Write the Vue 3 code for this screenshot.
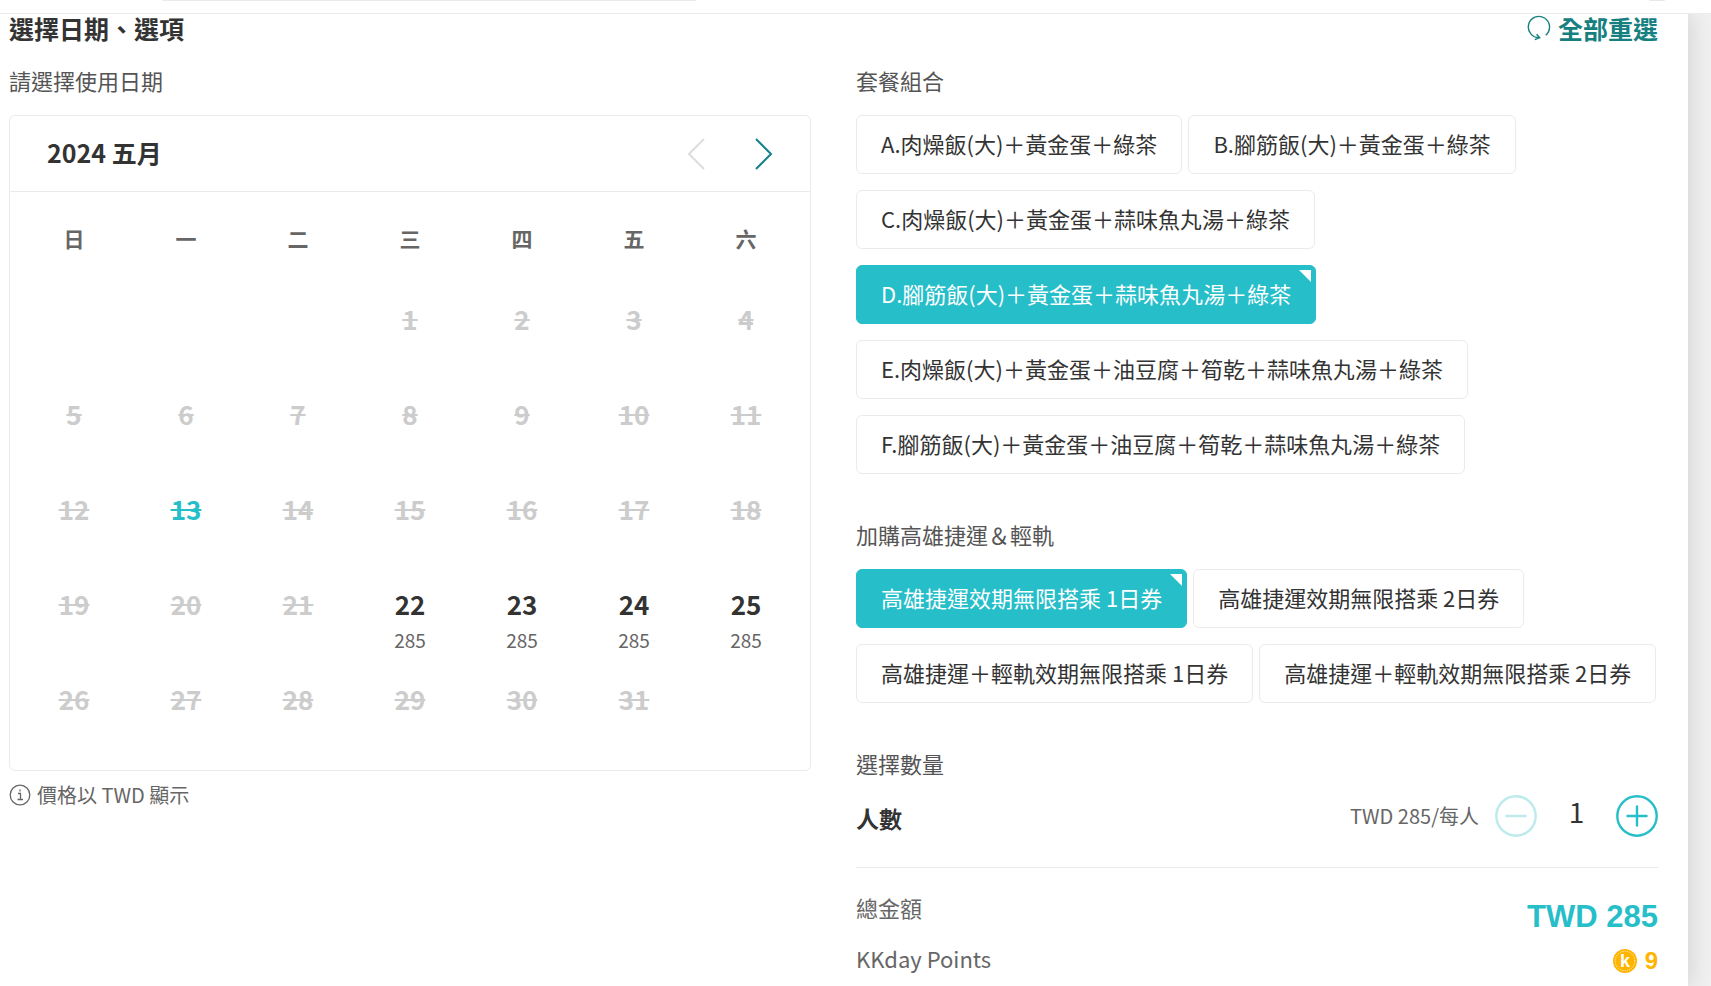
<template>
    <div class="page">
        <header class="topbar">
            <div class="search-edge"></div>
            <div class="avatar-edge"></div>
        </header>
        <main class="panel">
            <div class="title-row">
                <h2>選擇日期、選項</h2>
                <button type="button" class="reset" @click="reset">
                    <svg width="24" height="27" viewBox="0 0 24 27" aria-hidden="true">
                        <path d="M18.8 21.1A10.6 10.6 0 1 0 12.7 23.6M9.6 20.3l3.1 3.4-4.9 2" />
                    </svg>
                    全部重選
                </button>
            </div>

            <div class="columns">
                <section>
                    <h3>請選擇使用日期</h3>
                    <div class="calendar">
                        <div class="month">
                            <strong>2024 五月</strong>
                            <div class="arrows">
                                <button type="button" aria-label="上個月" disabled>
                                    <svg width="18" height="32" viewBox="0 0 18 32"><path d="M17 1L2 16l15 15" /></svg>
                                </button>
                                <button type="button" aria-label="下個月">
                                    <svg width="18" height="32" viewBox="0 0 18 32"><path d="M1 1l15 15L1 31" /></svg>
                                </button>
                            </div>
                        </div>
                        <table>
                            <thead>
                                <tr>
                                    <th v-for="name in weekdays" :key="name">{{ name }}</th>
                                </tr>
                            </thead>
                            <tbody>
                                <tr v-for="(week, i) in weeks" :key="i">
                                    <td v-for="(day, j) in week" :key="j">
                                        <button
                                            v-if="day"
                                            type="button"
                                            class="day"
                                            :class="{ today: day === 13 }"
                                            :disabled="!prices[day]"
                                        >
                                            <span class="number">{{ day }}</span>
                                            <span v-if="prices[day]" class="price">{{ prices[day] }}</span>
                                        </button>
                                    </td>
                                </tr>
                            </tbody>
                        </table>
                    </div>
                    <p class="note">
                        <svg width="22" height="22" viewBox="0 0 22 22" aria-hidden="true">
                            <circle cx="11" cy="11" r="9.8" />
                            <path d="M9 9.5h2.5v6M8.5 15.5h5.5M11 5.5v2" />
                        </svg>
                        價格以 TWD 顯示
                    </p>
                </section>

                <section>
                    <div v-for="group in groups" :key="group.title" class="group">
                        <h3>{{ group.title }}</h3>
                        <div class="chips">
                            <button
                                v-for="(option, i) in group.options"
                                :key="option"
                                type="button"
                                class="chip"
                                :class="{ selected: group.selected === i }"
                                :aria-pressed="group.selected === i"
                                @click="group.selected = i"
                            >{{ option }}</button>
                        </div>
                    </div>

                    <h3>選擇數量</h3>
                    <div class="quantity">
                        <strong>人數</strong>
                        <span class="unit">TWD 285/每人</span>
                        <button type="button" class="step" aria-label="減少" :disabled="count < 2" @click="count--">
                            <svg width="42" height="42" viewBox="0 0 42 42">
                                <circle cx="21" cy="21" r="19.7" />
                                <path d="M10.5 21h21" />
                            </svg>
                        </button>
                        <output>{{ count }}</output>
                        <button type="button" class="step" aria-label="增加" @click="count++">
                            <svg width="42" height="42" viewBox="0 0 42 42">
                                <circle cx="21" cy="21" r="19.7" />
                                <path d="M10.5 21h21M21 10.5v21" />
                            </svg>
                        </button>
                    </div>

                    <dl class="totals">
                        <div class="total">
                            <dt>總金額</dt>
                            <dd>TWD {{ count * 285 }}</dd>
                        </div>
                        <div class="points">
                            <dt>KKday Points</dt>
                            <dd>
                                <svg width="24" height="24" viewBox="0 0 24 24" aria-hidden="true">
                                    <circle class="coin" cx="12" cy="12" r="12" />
                                    <circle class="dots" cx="12" cy="12" r="9.8" />
                                    <text x="12" y="18" text-anchor="middle">k</text>
                                </svg>
                                {{ count * 9 }}
                            </dd>
                        </div>
                    </dl>
                </section>
            </div>
        </main>
    </div>
</template>

<script setup>
import { ref } from "vue";

const weekdays = ["日", "一", "二", "三", "四", "五", "六"];

// May 2024 starts on a Wednesday
const weeks = Array.from({ length: 5 }, (_, week) =>
    Array.from({ length: 7 }, (_, i) => {
        const day = week * 7 + i - 2;
        return day > 0 && day < 32 ? day : null;
    })
);

const prices = { 22: 285, 23: 285, 24: 285, 25: 285 };

const groups = ref([
    {
        title: "套餐組合",
        selected: 3,
        options: [
            "A.肉燥飯(大)＋黃金蛋＋綠茶",
            "B.腳筋飯(大)＋黃金蛋＋綠茶",
            "C.肉燥飯(大)＋黃金蛋＋蒜味魚丸湯＋綠茶",
            "D.腳筋飯(大)＋黃金蛋＋蒜味魚丸湯＋綠茶",
            "E.肉燥飯(大)＋黃金蛋＋油豆腐＋筍乾＋蒜味魚丸湯＋綠茶",
            "F.腳筋飯(大)＋黃金蛋＋油豆腐＋筍乾＋蒜味魚丸湯＋綠茶",
        ],
    },
    {
        title: "加購高雄捷運＆輕軌",
        selected: 0,
        options: [
            "高雄捷運效期無限搭乘 1日券",
            "高雄捷運效期無限搭乘 2日券",
            "高雄捷運＋輕軌效期無限搭乘 1日券",
            "高雄捷運＋輕軌效期無限搭乘 2日券",
        ],
    },
]);

const count = ref(1);

function reset() {
    groups.value.forEach((group) => {
        group.selected = null;
    });
    count.value = 1;
}
</script>

<style>
body {
    background: #f0f0f0;
}
</style>

<style scoped>
.page {
    display: flex;
    flex-direction: column;
    min-height: 100vh;
    overflow: hidden;
    color: #333;
    font-family: "Noto Sans CJK TC", sans-serif;
    font-size: 22px;
    line-height: 32px;
}

button {
    padding: 0;
    border: 0;
    background: none;
    color: inherit;
    font: inherit;
    cursor: pointer;
}

svg {
    display: block;
    fill: none;
    stroke: currentColor;
}

h2, h3, p, dl, dd {
    margin: 0;
}

.topbar {
    position: relative;
    z-index: 1;
    display: flex;
    justify-content: space-between;
    height: 13px;
    padding: 0 46px 0 162px;
    border-bottom: 1px solid #ebebeb;
    background: #fff;
}

.search-edge {
    width: 534px;
    height: 1px;
    background: #ebebeb;
}

.avatar-edge {
    width: 16px;
    height: 1px;
    border-radius: 0 0 8px 8px;
    background: #e8e8e8;
}

.panel {
    flex: 1;
    margin-right: 23px;
    padding: 0 30px 0 9px;
    background: #fff;
    box-shadow: 0 0 24px rgba(0, 0, 0, 0.15);
}

.title-row {
    display: flex;
    justify-content: space-between;
    margin-bottom: 24px;
}

h2, .reset {
    font-size: 25px;
    font-weight: 700;
    line-height: 28px;
}

.reset {
    display: flex;
    gap: 7px;
    color: #15807f;
}

.reset svg {
    stroke-width: 1.4;
}

h3 {
    margin-bottom: 21px;
    color: #555;
    font-size: 22px;
    font-weight: 400;
    line-height: 28px;
}

.columns {
    display: grid;
    grid-template-columns: 1fr 1fr;
    gap: 45px;
}

.calendar {
    border: 1px solid #ebebeb;
    border-radius: 6px;
}

.month {
    display: flex;
    justify-content: space-between;
    align-items: center;
    height: 75px;
    padding: 0 37px;
    border-bottom: 1px solid #ebebeb;
    font-size: 25px;
}

.month strong {
    padding-bottom: 4px;
}

.arrows {
    display: flex;
    gap: 50px;
    color: #15808a;
}

.arrows svg {
    stroke-width: 2;
}

.arrows button:disabled {
    color: #ddd;
}

table {
    width: calc(100% - 16px);
    margin: 0 8px 8px;
    border-collapse: collapse;
    table-layout: fixed;
}

th {
    box-sizing: border-box;
    height: 95px;
    padding: 0 0 4px;
    color: #666;
    font-size: 21px;
}

td {
    height: 95px;
    padding: 0;
    text-align: center;
    vertical-align: top;
}

.day {
    display: flex;
    flex-direction: column;
    align-items: center;
    gap: 4px;
    width: 100%;
    padding-top: 16px;
}

.number {
    font-size: 26px;
    font-weight: 700;
}

.price {
    color: #666;
    font-size: 19px;
}

.day:disabled {
    color: #ccc;
    text-decoration: line-through;
}

.day.today {
    color: #26bec9;
}

.note {
    display: flex;
    align-items: center;
    gap: 6px;
    margin-top: 8px;
    color: #666;
    font-size: 20px;
}

.note svg {
    stroke-width: 1.3;
}

.group {
    margin-bottom: 46px;
}

.chips {
    display: flex;
    flex-wrap: wrap;
    gap: 16px 6px;
}

.chip {
    position: relative;
    height: 59px;
    padding: 0 24px 4px;
    border: 1px solid #ebebeb;
    border-radius: 6px;
}

.chip.selected {
    border-color: #26bec9;
    background: #26bec9;
    color: #fff;
}

.chip.selected::after {
    content: "";
    position: absolute;
    top: 4px;
    right: 4px;
    border-top: 12px solid #fff;
    border-left: 12px solid transparent;
}

.quantity {
    display: flex;
    align-items: center;
    margin-top: -8px;
    padding: 5px 0 30px;
    border-bottom: 1px solid #ebebeb;
}

.quantity strong {
    margin-right: auto;
    padding-top: 4px;
    font-size: 23px;
}

.unit {
    margin-right: 16px;
    color: #666;
    font-size: 20px;
}

.quantity output {
    width: 79px;
    padding-bottom: 10px;
    font-size: 28px;
    text-align: center;
}

.step {
    color: #26bec9;
}

.step svg {
    stroke-width: 2.4;
}

.step:disabled {
    opacity: 0.3;
}

.totals {
    padding-top: 23px;
    color: #666;
}

.total, .points {
    display: flex;
    justify-content: space-between;
    align-items: flex-start;
}

.totals dd {
    font-family: "Liberation Sans", sans-serif;
    font-weight: 700;
}

.total dd {
    padding-top: 10px;
    color: #26bec9;
    font-size: 31px;
}

.points {
    padding-top: 9px;
}

.points dd {
    display: flex;
    align-items: center;
    gap: 8px;
    padding-top: 3px;
    color: #ffb400;
    font-size: 24px;
}

.coin {
    fill: #ffb400;
    stroke: none;
}

.dots {
    stroke: #fff;
    stroke-width: 0.8;
    stroke-dasharray: 1.2 1.2;
}

.points text {
    fill: #fff;
    stroke: none;
    font-size: 18px;
}
</style>
